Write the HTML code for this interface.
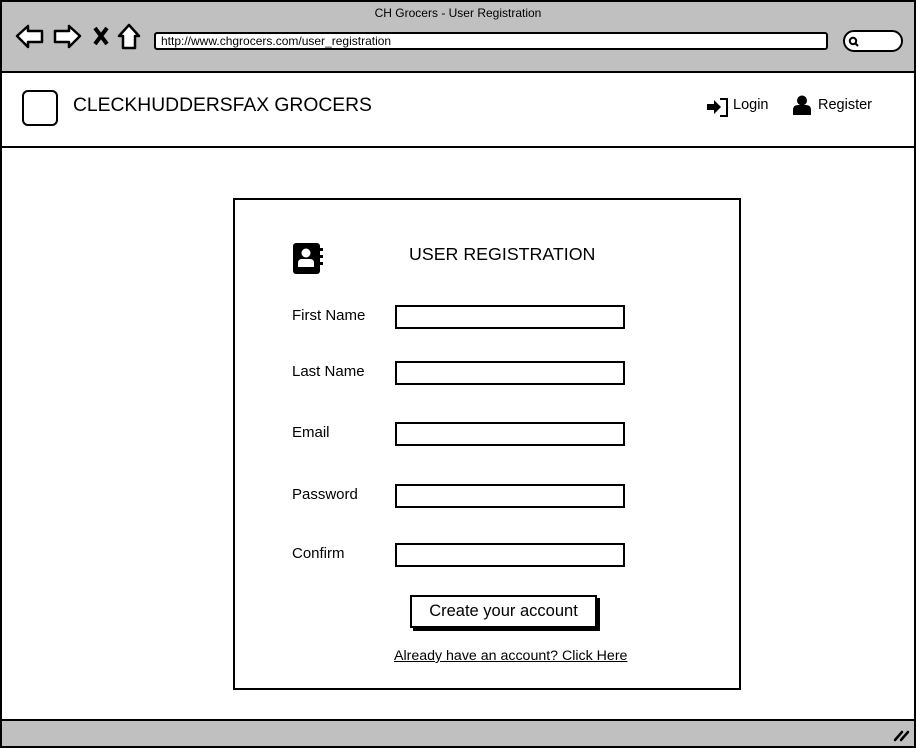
<!DOCTYPE html>
<html><head><style>
*{margin:0;padding:0;box-sizing:border-box}
body{width:916px;height:748px;overflow:hidden;background:#fff;font-family:"Liberation Sans",sans-serif;color:#000;position:relative}
.a{position:absolute}
.in{position:absolute;left:395px;width:230px;height:24px;border:2px solid #000;background:#fff}
.lb{position:absolute;left:292px;font-size:15px}
</style></head><body>
<div class="a" style="left:0;top:0;width:916px;height:748px;border:2px solid #000"></div>
<div class="a" style="left:2px;top:2px;width:912px;height:71px;background:#c0c0c0;border-bottom:2px solid #000"></div>
<div class="a" style="left:0;top:6px;width:916px;text-align:center;font-size:12px">CH Grocers - User Registration</div>
<svg class="a" style="left:14px;top:22px" width="130" height="30" viewBox="0 0 130 30">
<path d="M3 14 L14 4 L14 9 L28 9 L28 20 L14 20 L14 25 Z" fill="#fff" stroke="#000" stroke-width="2.5" stroke-linejoin="round"/>
<path d="M66 14 L55 4 L55 9 L41 9 L41 20 L55 20 L55 25 Z" fill="#fff" stroke="#000" stroke-width="2.5" stroke-linejoin="round"/>
<path d="M81 6 L93 22 M93 6 L81 22" stroke="#000" stroke-width="4"/>
<path d="M115 3 L105 14 L109 14 L109 26 L121 26 L121 14 L125 14 Z" fill="#fff" stroke="#000" stroke-width="2.5" stroke-linejoin="round"/>
</svg>
<div class="a" style="left:154px;top:32px;width:674px;height:18px;background:#fff;border:2px solid #000;border-radius:3px;font-size:12px;line-height:14px;padding-left:5px">http://www.chgrocers.com/user_registration</div>
<div class="a" style="left:843px;top:30px;width:60px;height:22px;background:#fff;border:2px solid #000;border-radius:11px"></div>
<svg class="a" style="left:848px;top:36px" width="12" height="12"><circle cx="5" cy="5" r="3.2" fill="none" stroke="#000" stroke-width="2"/><path d="M7 7 L10 10" stroke="#000" stroke-width="2"/></svg>
<div class="a" style="left:2px;top:146px;width:912px;height:2px;background:#000"></div>
<div class="a" style="left:22px;top:90px;width:36px;height:36px;border:2.5px solid #000;border-radius:6px"></div>
<div class="a" style="left:73px;top:95px;font-size:19.3px">CLECKHUDDERSFAX GROCERS</div>
<svg class="a" style="left:706px;top:96px" width="24" height="22" viewBox="0 0 24 22"><path d="M1 8 H8 V4 L15 11 L8 18 V14 H1 Z" fill="#000"/><path d="M14 3 H21 V20 H14" fill="none" stroke="#000" stroke-width="2"/></svg>
<div class="a" style="left:733px;top:97px;font-size:14.5px">Login</div>
<svg class="a" style="left:793px;top:95px" width="18" height="20" viewBox="0 0 18 20"><circle cx="9" cy="5.5" r="5" fill="#000"/><path d="M0 20 V15 Q0 10 5 10 H13 Q18 10 18 15 V20 Z" fill="#000"/></svg>
<div class="a" style="left:818px;top:97px;font-size:14.5px">Register</div>
<div class="a" style="left:233px;top:198px;width:508px;height:492px;border:2px solid #000"></div>
<svg class="a" style="left:292px;top:242px" width="32" height="32" viewBox="0 0 32 32"><rect x="1" y="1" width="27" height="31" rx="3" fill="#000"/><rect x="28" y="6" width="3" height="3" fill="#000"/><rect x="28" y="13" width="3" height="3" fill="#000"/><rect x="28" y="20" width="3" height="3" fill="#000"/><circle cx="14" cy="11" r="4.5" fill="#fff"/><path d="M6 25 V21 Q6 17 10 17 H18 Q22 17 22 21 V25 Z" fill="#fff"/></svg>
<div class="a" style="left:409px;top:244px;font-size:17.8px">USER REGISTRATION</div>
<div class="lb" style="top:307px">First Name</div><div class="in" style="top:305px"></div>
<div class="lb" style="top:363px">Last Name</div><div class="in" style="top:361px"></div>
<div class="lb" style="top:424px">Email</div><div class="in" style="top:422px"></div>
<div class="lb" style="top:486px">Password</div><div class="in" style="top:484px"></div>
<div class="lb" style="top:545px">Confirm</div><div class="in" style="top:543px"></div>
<div class="a" style="left:410px;top:595px;width:187px;height:33px;border:2px solid #000;box-shadow:3px 3px 0 #000;background:#fff;text-align:center;font-size:16.5px;line-height:29px">Create your account</div>
<div class="a" style="left:394px;top:648px;font-size:14.2px;text-decoration:underline">Already have an account? Click Here</div>
<div class="a" style="left:2px;top:719px;width:912px;height:27px;background:#c0c0c0;border-top:2px solid #000"></div>
<svg class="a" style="left:893px;top:728px" width="18" height="14"><path d="M2 12 L9 4 M8 12 L15 4" stroke="#000" stroke-width="2.5" stroke-linecap="round"/></svg>
</body></html>
